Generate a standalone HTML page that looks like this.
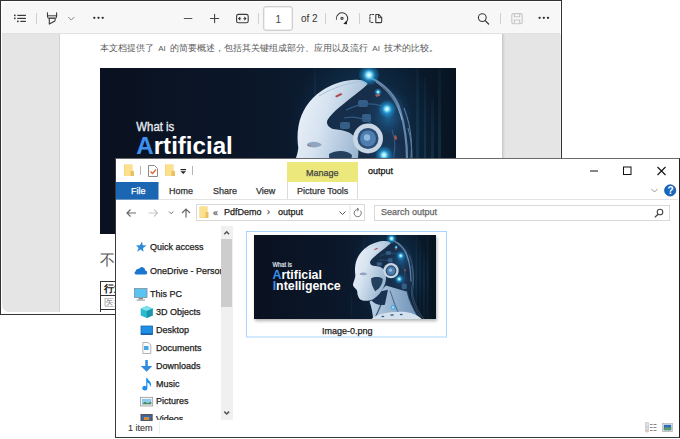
<!DOCTYPE html>
<html><head><meta charset="utf-8">
<style>
*{margin:0;padding:0;box-sizing:border-box}
html,body{width:680px;height:439px;overflow:hidden;background:#fff;font-family:"Liberation Sans",sans-serif;position:relative}
.a{position:absolute}
.t{position:absolute;white-space:nowrap;line-height:1}
/* PDF window */
#pdf{left:0;top:0;width:562px;height:315px;border:1px solid #333;background:#fff}
#tb{left:2px;top:2px;width:558px;height:32px;background:#f7f7f7;border-bottom:1px solid #e1e1e1;border-top-left-radius:7px;border-top-right-radius:0}
#gray{left:2px;top:34px;width:558px;box-shadow:1px 0 0 #ececec;height:278px;background:#e5e5e5;border-bottom-left-radius:7px}
#page{left:60px;top:34px;width:442px;height:278px;background:#fff;box-shadow:-1px 0 0 #d2d2d2,1px 0 0 #cacaca,2px 0 0 #d6d6d6,3px 0 0 #dedede}
.sep{position:absolute;width:1px;background:#d0d0d0}
/* explorer */
#ex{left:115px;top:158px;width:565px;height:280px;border:1px solid #3a3a3a;border-top-color:#6a6a6a;border-right-color:#202020;background:#fff;overflow:hidden}
.ui{font-family:"Liberation Sans",sans-serif;font-size:9px;color:#222;-webkit-text-stroke:0.25px currentColor}
</style></head><body>
<svg width="0" height="0" style="position:absolute">
<defs>
  <linearGradient id="bgG" x1="0" y1="0" x2="1" y2="0">
    <stop offset="0" stop-color="#0a1120"/>
    <stop offset="0.5" stop-color="#0b182b"/>
    <stop offset="0.72" stop-color="#0c2136"/>
    <stop offset="0.88" stop-color="#0a1b2d"/>
    <stop offset="1" stop-color="#08131f"/>
  </linearGradient>
  <radialGradient id="haloG" cx="0.5" cy="0.5" r="0.5">
    <stop offset="0" stop-color="#1f6fa6" stop-opacity="0.6"/>
    <stop offset="0.6" stop-color="#17507e" stop-opacity="0.25"/>
    <stop offset="1" stop-color="#17507e" stop-opacity="0"/>
  </radialGradient>
  <linearGradient id="skinG" x1="0" y1="0" x2="1" y2="0.5">
    <stop offset="0" stop-color="#f2f6fb"/>
    <stop offset="0.45" stop-color="#d6e3f0"/>
    <stop offset="1" stop-color="#93b0cd"/>
  </linearGradient>
  <linearGradient id="neckG" x1="0" y1="0" x2="1" y2="0">
    <stop offset="0" stop-color="#b9cfe4"/>
    <stop offset="1" stop-color="#6b8fb5"/>
  </linearGradient>
  <radialGradient id="glowG" cx="0.5" cy="0.5" r="0.5">
    <stop offset="0" stop-color="#ffffff"/>
    <stop offset="0.22" stop-color="#8eeaff"/>
    <stop offset="0.55" stop-color="#1ea6ee" stop-opacity="0.55"/>
    <stop offset="1" stop-color="#1ea6ee" stop-opacity="0"/>
  </radialGradient>
  <radialGradient id="mechG" cx="0.7" cy="0.4" r="0.7">
    <stop offset="0" stop-color="#2c5f8e"/>
    <stop offset="0.5" stop-color="#1a3a5e"/>
    <stop offset="1" stop-color="#0f1f36"/>
  </radialGradient>
  <linearGradient id="streakG" x1="0" y1="0" x2="0" y2="1">
    <stop offset="0" stop-color="#2a7aa8" stop-opacity="0.06"/>
    <stop offset="0.5" stop-color="#2a7aa8" stop-opacity="0.22"/>
    <stop offset="1" stop-color="#2a7aa8" stop-opacity="0.06"/>
  </linearGradient>
  <symbol id="ai" viewBox="0 0 356 166" preserveAspectRatio="none">
    <rect width="356" height="166" fill="url(#bgG)"/>
    <ellipse cx="265" cy="70" rx="78" ry="95" fill="url(#haloG)" opacity="0.85"/>
    <g fill="url(#streakG)">
      <rect x="316" y="0" width="3" height="166"/>
      <rect x="324" y="10" width="2" height="150"/>
      <rect x="331" y="30" width="3" height="136"/>
      <rect x="338" y="0" width="3" height="166"/>
      <rect x="214" y="0" width="2" height="50" opacity="0.6"/>
      <rect x="190" y="110" width="2" height="56" opacity="0.6"/>
    </g>
    <!-- dome / mech interior -->
    <path d="M266 10 C282 12 298 24 306 42 C312 56 313 76 311 92 C309 104 304 112 298 118 L258 100 C254 80 240 66 228 56 C232 40 246 22 266 10 Z" fill="#172e4a"/>
    <ellipse cx="288" cy="48" rx="24" ry="30" fill="url(#haloG)"/>
    <ellipse cx="288" cy="48" rx="14" ry="18" fill="url(#haloG)"/>
    <ellipse cx="286" cy="88" rx="18" ry="20" fill="url(#haloG)"/>
    <path d="M271 10 C284 16 296 28 300 42 C305 58 307 74 307 92" fill="none" stroke="#7fa6cc" stroke-width="2.2" opacity="0.75"/>
    <path d="M276 14 C290 24 298 36 302 52" fill="none" stroke="#b8d0e8" stroke-width="0.8" opacity="0.7"/>
    <!-- cables down the back -->
    <path d="M300 110 C302 130 312 150 326 166 L304 166 C296 150 288 132 284 114 Z" fill="#1d4068"/>
    <g fill="none" stroke="#8ab8e0" stroke-width="1" opacity="0.6">
      <path d="M304 40 C312 60 314 84 308 106 C306 128 316 148 328 166"/>
      <path d="M308 60 C314 80 312 100 310 114 C312 132 320 150 332 166"/>
    </g>
    <g fill="#3d6a96" opacity="0.8">
      <rect x="240" y="54" width="10" height="7" rx="2"/>
      <rect x="258" y="32" width="10" height="7" rx="2"/>
      <rect x="262" y="46" width="9" height="8" rx="2"/>
      <rect x="289" y="96" width="10" height="11" rx="3"/>
    </g>
    <g fill="none" stroke="#2f5a86" stroke-width="1.2">
      <path d="M246 42 C258 36 270 34 282 38"/>
      <path d="M244 50 C254 48 264 50 272 56"/>
      <path d="M292 62 C296 72 296 82 292 96"/>
    </g>
    <path d="M275 27 l4 -1.5 l1.5 2 l-4 1.5z" fill="#c85a4a" opacity="0.9"/>
    <path d="M294 68 l2 -1 l1.2 4 l-2 1z" fill="#c85a4a" opacity="0.9"/>
    <!-- neck -->
    <path d="M226 132 C230 142 232 154 233 166 L324 166 C314 150 304 130 300 112 L258 100 L240 120 Z" fill="url(#neckG)"/>
    <path d="M228 128 C236 136 244 140 256 138 L262 108 L244 112 Z" fill="#1a3354"/>
    <path d="M254 122 C250 136 242 152 236 166" fill="none" stroke="#1b3658" stroke-width="2.5" opacity="0.8"/>
    <path d="M266 110 C272 130 280 150 288 166" fill="none" stroke="#2a4a70" stroke-width="2" opacity="0.7"/>
    <path d="M300 112 C304 132 314 150 324 166" fill="none" stroke="#1b3658" stroke-width="3" opacity="0.8"/>
    <!-- shoulders -->
    <path d="M230 166 C238 156 266 150 296 152 C312 154 322 160 328 166 Z" fill="#d4e2ef"/>
    <g fill="#345a84"><ellipse cx="270" cy="158" rx="4" ry="1.6"/><ellipse cx="288" cy="157" rx="3" ry="1.4"/><ellipse cx="252" cy="161" rx="3" ry="1.4"/></g>
    <!-- face + shell -->
    <path d="M267.6 15.7 C264 9 240 10 221.4 23 C209 31 201 44 198.5 58 C197 66 197.5 74 198.3 80 C197.5 88 194 94 193.5 98 C194 102 196 104 197.8 105.3 C200 107 201.5 109 201.9 111.3 C202.3 114 202 117 203 119 C205 125 207 128 211.5 129 C216 131 226 130 233 127 C242 122 250 112 255 100 C258 92 259 86 258 80 L255 70 C252 64 244 62 233 61 C228 59 226 56 227.5 52 C232 44 246 34 256 26 C262 21 266 18 267.6 15.7 Z" fill="url(#skinG)"/>
    <path d="M219 28 C232 20 248 15 262 13" fill="none" stroke="#aac2da" stroke-width="1"/>
    <path d="M235 28 l6 -3 l1.5 1.5 l-6 3z" fill="#b04848"/>
    <path d="M207 76 C211 73 218 73 222 77 C218 80 211 80 207 78z" fill="#8ea6c2"/>
    <path d="M208 77 l3 1" stroke="#c05a6a" stroke-width="0.8"/>
    <!-- cheek mech -->
    <path d="M229 86 C236 82 247 82 252 87 C251 98 246 106 237 111 C232 104 229 95 229 86 Z" fill="#23405f"/>
    <!-- ear disc -->
    <circle cx="268" cy="70.5" r="15" fill="#c9d7e5"/>
    <circle cx="268" cy="70.5" r="10.5" fill="#2a4e76"/>
    <circle cx="268" cy="70.5" r="8" fill="#4f7eaf"/>
    <circle cx="267" cy="69.5" r="3.2" fill="#8fb8e0"/>
    <!-- glows -->
    <circle cx="269" cy="7" r="11" fill="url(#glowG)"/>
    <circle cx="287" cy="41" r="9" fill="url(#glowG)"/>
    <circle cx="284" cy="87" r="9" fill="url(#glowG)"/>
    <circle cx="278" cy="24" r="4" fill="url(#glowG)"/>
    <circle cx="272" cy="143" r="6" fill="url(#glowG)"/>
    <!-- text -->
    <g font-family="Liberation Sans, sans-serif" font-weight="bold">
      <text x="36.3" y="62.6" font-size="12.5" font-weight="normal" fill="#e6ecf2" stroke="#e6ecf2" stroke-width="0.35" textLength="38" lengthAdjust="spacingAndGlyphs">What is</text>
      <text x="36.3" y="86.2" font-size="24.5" fill="#ffffff" textLength="96.5" lengthAdjust="spacingAndGlyphs"><tspan fill="#3b90f0">A</tspan>rtificial</text>
      <text x="36.5" y="108" font-size="24.5" fill="#ffffff" textLength="133" lengthAdjust="spacingAndGlyphs"><tspan fill="#3b90f0">I</tspan>ntelligence</text>
    </g>
  </symbol>
</defs>
</svg>

<!-- ========== PDF WINDOW ========== -->
<div id="pdf" class="a"></div>
<div id="tb" class="a"></div>
<div id="gray" class="a"></div>
<div id="page" class="a"></div>

<!-- toolbar icons -->
<svg class="a" style="left:0;top:0" width="562" height="34" viewBox="0 0 562 34">
  <g fill="#3a3a3a">
    <rect x="14" y="14.6" width="1.6" height="1.6"/><rect x="14" y="17.6" width="1.6" height="1.6"/><rect x="17" y="20.6" width="1.6" height="1.6"/>
    <rect x="17.3" y="14.8" width="8.6" height="1.2"/><rect x="17.3" y="17.8" width="8.6" height="1.2"/><rect x="20.3" y="20.8" width="5.6" height="1.2"/>
  </g>
  <g fill="none" stroke="#3a3a3a" stroke-width="1.1" stroke-linecap="round" stroke-linejoin="round">
    <!-- highlighter -->
    <path d="M47.5 12.8v3.4c0 1.2 0.6 2 1.6 2.3h5.9c1 -0.3 1.6 -1.1 1.6 -2.3v-3.4"/>
    <path d="M47.8 15.8h8.9" stroke-width="1"/>
    <path d="M49.3 17.6h5.8" stroke="#999" stroke-width="1.2"/>
    <path d="M49.3 19v5.1l5.6-3.1 0.3-2"/>
    <!-- chevron -->
    <path d="M68.6 17.3l2.7 2.8 2.7-2.8" stroke="#8a8a8a" stroke-width="1"/>
    <!-- minus -->
    <path d="M184.3 18.5h7.6" stroke="#555"/>
    <!-- plus -->
    <path d="M210.5 18.5h8.2M214.6 14.4v8.2" stroke="#444"/>
    <!-- fit -->
    <rect x="236.6" y="14.4" width="11.6" height="8.4" rx="1.8" stroke="#3a3a3a"/>
  </g>
  <path d="M238 18.6l2.2-2.1v4.2zM246.5 18.6l-2.2-2.1v4.2z" fill="#2a2a2a"/><path d="M240 18.6h1.2M243.3 18.6h1.2" stroke="#555" stroke-width="0.9"/>
  <g fill="none" stroke="#3a3a3a" stroke-width="1.1" stroke-linecap="round" stroke-linejoin="round">
    <!-- rotate -->
    <path d="M336.4 19.2A5.7 5.7 0 1 1 346.2 22.4"/>
    <circle cx="342" cy="18.3" r="1.1"/>
    <!-- dual page -->
    <path d="M373.6 14.5h-2.4a1.3 1.3 0 0 0-1.3 1.3v5.4a1.3 1.3 0 0 0 1.3 1.3h2.4" stroke-dasharray="1.6 1.3"/>
    <path d="M375.8 14.5h2.9l3 3.1v4a1 1 0 0 1-1 1h-4.9z"/>
    <path d="M378.5 14.8v2.9h2.9" stroke-width="0.9"/>
    <!-- search -->
    <circle cx="482.3" cy="17.6" r="3.9"/>
    <path d="M485.2 20.6l3.4 3.4" stroke-width="1.3"/>
  </g>
  <path d="M343.3 24l3.8 0.3-0.5-3.9z" fill="#222"/>
  <!-- save disabled -->
  <g fill="none" stroke="#c6c6c6" stroke-width="1.1"><rect x="511.8" y="13.6" width="10.4" height="10.2" rx="1.6"/><path d="M514.3 13.8v3h5.4v-3M514.3 23.6v-3.6h5.4v3.6"/></g>
  <g fill="#2a2a2a">
    <circle cx="94.3" cy="17.8" r="1.15"/><circle cx="98.5" cy="17.8" r="1.15"/><circle cx="102.7" cy="17.8" r="1.15"/>
    <circle cx="539.6" cy="17.8" r="1.15"/><circle cx="543.8" cy="17.8" r="1.15"/><circle cx="548" cy="17.8" r="1.15"/>
  </g>
</svg>
<div class="sep" style="left:36px;top:13px;height:11px"></div>
<div class="sep" style="left:258px;top:13px;height:11px"></div>
<div class="sep" style="left:325px;top:13px;height:11px"></div>
<div class="sep" style="left:359px;top:13px;height:11px"></div>
<div class="sep" style="left:500px;top:13px;height:11px"></div>
<div class="a" style="left:263px;top:6px;width:30px;height:25px;background:#fff;border:1px solid #cfcfcf;box-shadow:inset 0 0 0 0.5px #dedede;border-radius:3px"></div>
<div class="t" style="left:275.5px;top:14.5px;font-size:10px;color:#444">1</div>
<div class="t" style="left:301px;top:14px;font-size:10px;color:#333">of 2</div>

<!-- page content -->
<div class="t" style="left:100px;top:44px;font-size:9px;word-spacing:2px;color:#5a5a5a;font-family:'Liberation Serif',serif">本文档提供了 <span style="font-family:'Liberation Sans',sans-serif;font-size:8px">AI</span> 的简要概述，包括其关键组成部分、应用以及流行 <span style="font-family:'Liberation Sans',sans-serif;font-size:8px">AI</span> 技术的比较。</div>
<div class="a" style="left:100px;top:68px;width:356px;height:166px;background:#0c1628;overflow:hidden" id="aiimg"><svg width="356" height="166"><use href="#ai"/></svg></div>
<div class="t" style="left:100px;top:253px;font-size:15px;color:#555;font-family:'Liberation Serif',serif">不</div>
<div class="a" style="left:100px;top:281px;width:40px;height:31px;border-left:1px solid #333;border-top:1px solid #333;overflow:hidden">
  <div class="a" style="left:0;top:13px;width:40px;height:1px;background:#333"></div>
  <div class="a" style="left:0;top:27px;width:40px;height:1px;background:#333"></div>
  <div class="t" style="left:3px;top:2px;font-size:10px;font-weight:bold;color:#111">行业</div>
  <div class="t" style="left:3px;top:16px;font-size:10px;color:#999">医疗</div>
</div>

<!-- ========== EXPLORER ========== -->
<div id="ex" class="a"></div>
<!-- title row -->
<svg class="a" style="left:116px;top:159px" width="562" height="66" viewBox="116 159 562 66">
  <!-- folder 1 -->
  <g>
    <path d="M124 164.5h8.5v11.5H124z" fill="#f3cf6b"/>
    <path d="M124.5 165h7.5v11h-7.5z" fill="#fbe08e"/>
    <path d="M130.5 171h3.5v5h-3.5z" fill="#e9c160"/>
  </g>
  <rect x="140" y="166" width="1" height="9" fill="#b4b4b4"/>
  <!-- doc check -->
  <path d="M148.5 165.5h6l3 3v8h-9z" fill="#fff" stroke="#8a8a8a" stroke-width="1"/>
  <path d="M150.5 171.5l2 2 3.5-4" fill="none" stroke="#e8642c" stroke-width="1.3"/>
  <!-- folder 2 -->
  <g>
    <path d="M165 164.5h8.5v11.5H165z" fill="#f3cf6b"/>
    <path d="M165.5 165h7.5v11h-7.5z" fill="#fbe08e"/>
    <path d="M171.5 171h3.5v5h-3.5z" fill="#e9c160"/>
  </g>
  <rect x="180.5" y="169" width="5.5" height="1.2" fill="#222"/>
  <path d="M180.5 171.3h5.5l-2.75 2.8z" fill="#222"/>
  <rect x="192" y="166" width="1" height="9" fill="#b4b4b4"/>
  <!-- manage tab -->
  <rect x="287" y="162" width="71" height="20" fill="#ece87c"/>
  <rect x="287" y="182" width="1" height="17" fill="#dadada"/>
  <rect x="357" y="182" width="1" height="17" fill="#dadada"/>
  <!-- window controls -->
  <rect x="590" y="170.5" width="8" height="1" fill="#111"/>
  <rect x="623.5" y="167" width="7.5" height="7.5" fill="none" stroke="#111" stroke-width="1"/>
  <path d="M657.5 167l8 8M665.5 167l-8 8" stroke="#111" stroke-width="1.1"/>
  <!-- ribbon -->
  <rect x="116" y="182" width="42.5" height="17" fill="#1a66b3"/>
  <rect x="116" y="199" width="563" height="1" fill="#e3e3e3"/>
  <rect x="116" y="199" width="42.5" height="0.6" fill="#1a66b3"/>
  <path d="M651.5 189l3 3 3-3" fill="none" stroke="#9a9a9a" stroke-width="1"/>
  <circle cx="670.2" cy="190.4" r="5.6" fill="#1768c0" stroke="#0f52a0" stroke-width="0.8"/>
  <!-- address row arrows -->
  <path d="M127 213h9M130.5 209.5L127 213l3.5 3.5" fill="none" stroke="#6a6a6a" stroke-width="1.2"/>
  <path d="M148.5 213h9M154 209.5l3.5 3.5-3.5 3.5" fill="none" stroke="#c9c9c9" stroke-width="1.2"/>
  <path d="M169 211.5l2.2 2.2 2.2-2.2" fill="none" stroke="#6a6a6a" stroke-width="1"/>
  <path d="M186 209v8.5M182 213l4-4 4 4" fill="none" stroke="#6a6a6a" stroke-width="1.2"/>
  <rect x="196.5" y="204.5" width="168" height="16" fill="#fff" stroke="#d9d9d9" stroke-width="1"/>
  <g>
    <path d="M199.5 206.5h8v11.5h-8z" fill="#f3cf6b"/>
    <path d="M200 207h7v10.5h-7z" fill="#fbe08e"/>
    <path d="M205.5 212h3v6h-3z" fill="#e9c160"/>
  </g>
  <path d="M339.5 211.5l3 3 3-3" fill="none" stroke="#555" stroke-width="1"/>
  <rect x="349.5" y="205" width="1" height="15" fill="#e3e3e3"/>
  <path d="M360.5 210.8a3.6 3.6 0 1 1-2.5-1.3" fill="none" stroke="#777" stroke-width="1"/>
  <path d="M357 208l2 1.5-1.8 1.6" fill="none" stroke="#777" stroke-width="1"/>
  <rect x="374.5" y="205.5" width="295" height="15" fill="#fff" stroke="#d9d9d9" stroke-width="1"/>
  <circle cx="660" cy="212" r="2.8" fill="none" stroke="#444" stroke-width="1.1"/>
  <path d="M658 214.2l-3.2 3.2" stroke="#444" stroke-width="1.3"/>
</svg>
<div class="t ui" style="left:306px;top:169px;color:#444">Manage</div>
<div class="t ui" style="left:368px;top:167px;color:#111">output</div>
<div class="t ui" style="left:131px;top:187px;color:#fff">File</div>
<div class="t ui" style="left:169px;top:187px;color:#333">Home</div>
<div class="t ui" style="left:213px;top:187px;color:#333">Share</div>
<div class="t ui" style="left:256px;top:187px;color:#333">View</div>
<div class="t ui" style="left:297px;top:187px;color:#333">Picture Tools</div>
<div class="t" style="left:667.4px;top:186.4px;font-size:10px;font-weight:bold;color:#fff">?</div>
<div class="t ui" style="left:213px;top:209px;color:#555">&#171;</div>
<div class="t ui" style="left:224px;top:208px;color:#222">PdfDemo</div>
<div class="t ui" style="left:267px;top:208px;color:#555">&#8250;</div>
<div class="t ui" style="left:278px;top:208px;color:#222">output</div>
<div class="t ui" style="left:381px;top:208px;color:#666">Search output</div>


<!-- nav pane -->
<svg class="a" style="left:116px;top:225px" width="562" height="212" viewBox="116 225 562 212">
  <!-- scrollbar -->
  <rect x="221" y="226" width="12" height="194" fill="#f0f0f0"/>
  <rect x="221" y="239" width="11" height="68" fill="#cdcdcd"/>
  <path d="M224.3 234.2l2.4-2.4 2.4 2.4" fill="none" stroke="#555" stroke-width="1.5"/>
  <path d="M224.3 411.6l2.4 2.4 2.4-2.4" fill="none" stroke="#555" stroke-width="1.5"/>
  <!-- star -->
  <path d="M142.01 241.60 L142.69 245.34 L146.64 245.47 L143.06 247.91 L143.48 251.73 L140.59 249.50 L136.89 251.73 L138.68 247.91 L135.99 245.47 L139.98 245.34z" fill="#2e8ad8"/>
  <!-- cloud -->
  <path d="M136.3 274.6h8.7a2.1 2.1 0 0 0 0.3-4.2 3.3 3.3 0 0 0-6.2-1.6 2.7 2.7 0 0 0-3.4 2.5 1.7 1.7 0 0 0 0.6 3.3z" fill="#1b76cf"/>
  <!-- monitor -->
  <rect x="134.5" y="288.5" width="12.5" height="9" fill="#5bc2f4" stroke="#7d8f9c" stroke-width="0.8"/>
  <rect x="138.5" y="298" width="4.5" height="1.5" fill="#8a8a8a"/>
  <rect x="136.5" y="299.5" width="8.5" height="1.2" fill="#aaa"/>
  <!-- 3D cube -->
  <path d="M146.7 306l6 2.5v7l-6 2.5-6-2.5v-7z" fill="#2bbcd0"/>
  <path d="M146.7 306l6 2.5-6 2.5-6-2.5z" fill="#7fe0ea"/>
  <path d="M146.7 311l6-2.5v7l-6 2.5z" fill="#1a97ad"/>
  <!-- desktop -->
  <rect x="141" y="326" width="11.5" height="8.5" fill="#1f8fe6" stroke="#1565b0" stroke-width="0.8"/>
  <rect x="141" y="333.5" width="11.5" height="1" fill="#0d4f90"/>
  <!-- documents -->
  <path d="M142.8 342.5h5.5l2.5 2.5v8.5h-8z" fill="#fafafa" stroke="#9aa3aa" stroke-width="0.8"/>
  <rect x="144" y="346" width="4.5" height="4" fill="#4aa6e6"/>
  <!-- downloads -->
  <path d="M145.3 360h2.5v6h4.5l-5.7 5.8-5.8-5.8h4.5z" fill="#2f8ae0"/>
  <!-- music -->
  <path d="M146.2 378h1.2c0.4 2.2 3.6 3.2 3.6 6.2c0 1.2-0.5 2.2-1 2.8c0.3-2.6-1.2-4-2.6-4.4v5.6a2.6 2.3 0 1 1-1.2-2z" fill="#1e8ff0"/>
  <!-- pictures -->
  <rect x="140.5" y="397.3" width="12.2" height="8.7" fill="#f2f2f2" stroke="#9a9a9a" stroke-width="0.8"/>
  <rect x="142" y="399" width="9.3" height="5.3" fill="#8fc9ef"/>
  <path d="M142 404.3l3-2.5 2.5 1.5 3.8-1.6v2.6z" fill="#4a8a5a"/>
  <!-- videos -->
  <rect x="140.5" y="414" width="12.2" height="7" fill="#555"/>
  <rect x="142" y="415.3" width="9.2" height="4.7" fill="#3a6ab0"/><rect x="144" y="417" width="5" height="3" fill="#d08a3a"/>
  <!-- status bar -->
  <rect x="159" y="421" width="1" height="13" fill="#eeeeee"/>
  <!-- view icons -->
  <rect x="645.5" y="422.5" width="3" height="9.5" rx="0.5" fill="#e0e0e0" stroke="#b8b8b8" stroke-width="0.6"/>
  <rect x="646" y="426" width="2" height="2" fill="#bcd8f4"/>
  <rect x="646" y="429.5" width="2" height="2" fill="#f4b8b8"/>
  <path d="M650 424.5h2.5M653.5 424.5h3M650 427.5h2.5M653.5 427.5h3M650 430.5h2.5M653.5 430.5h3" stroke="#777" stroke-width="0.9"/>
  <rect x="662.5" y="423.5" width="10" height="8" fill="#e8e8e8" stroke="#b0b0b0" stroke-width="0.7"/>
  <rect x="663.8" y="424.8" width="7.4" height="5.4" fill="#2c6cc0"/>
  <path d="M663.8 428.5l2.5-1.8 2.5 1 2.4-0.8v3.3h-7.4z" fill="#5a9a6a"/>
  <!-- selection box -->
  <rect x="246.5" y="231.5" width="200" height="105.5" fill="none" stroke="#a8d5ff" stroke-width="1"/>
</svg>
<div class="t ui" style="left:150px;top:243px">Quick access</div>
<div class="t ui" style="left:150px;top:267px;width:71px;overflow:hidden">OneDrive - Personal</div>
<div class="t ui" style="left:150px;top:290px">This PC</div>
<div class="t ui" style="left:156px;top:308px">3D Objects</div>
<div class="t ui" style="left:156px;top:326px">Desktop</div>
<div class="t ui" style="left:156px;top:344px">Documents</div>
<div class="t ui" style="left:156px;top:362px">Downloads</div>
<div class="t ui" style="left:156px;top:380px">Music</div>
<div class="t ui" style="left:156px;top:397px">Pictures</div>
<div class="a" style="left:150px;top:412px;width:70px;height:8px;overflow:hidden"><div class="t ui" style="left:6px;top:3px">Videos</div></div>
<div class="t ui" style="left:128px;top:424px;color:#333;-webkit-text-stroke:0.1px #333">1 item</div>
<div class="a" style="left:254px;top:235px;width:182px;height:84px;box-shadow:1px 2px 3px rgba(0,0,0,0.3);background:#0c1628;overflow:hidden" id="thumb"><svg width="182" height="84" style="display:block"><use href="#ai" width="182" height="84"/></svg></div>
<div class="t ui" style="left:322px;top:327px;color:#222">Image-0.png</div>
</body></html>
